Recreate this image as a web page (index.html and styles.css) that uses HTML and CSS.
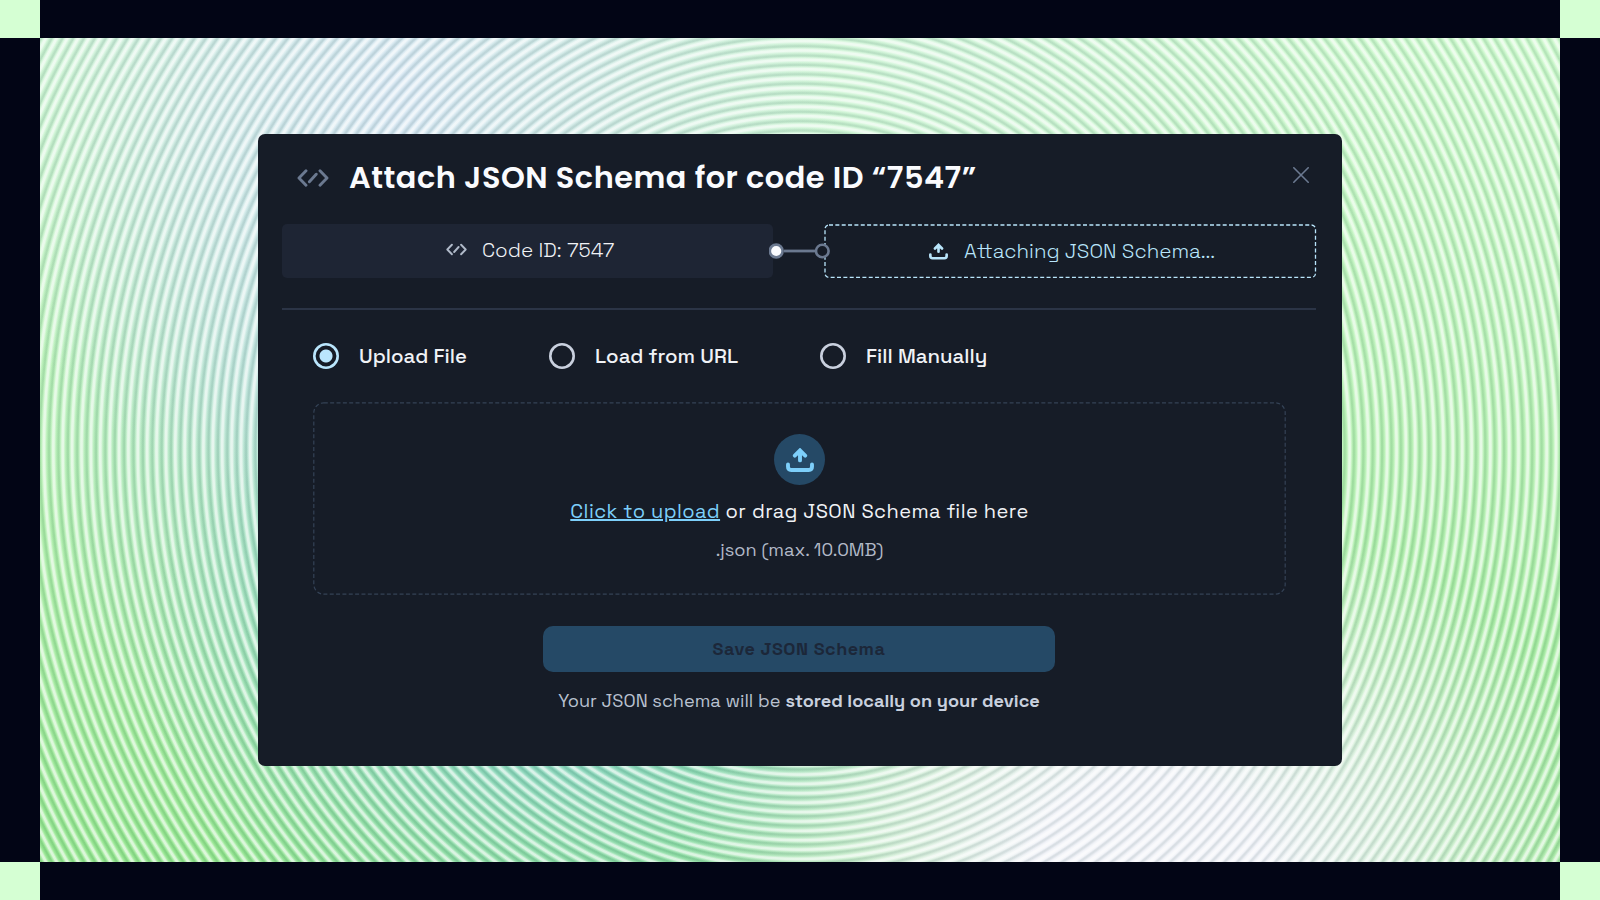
FILE: index.html
```html
<!DOCTYPE html>
<html lang="en">
<head>
<meta charset="utf-8">
<title>Attach JSON Schema</title>
<link rel="stylesheet" href="styles.css">
</head>
<body>
<svg class="defs" aria-hidden="true">
  <symbol id="code" viewBox="0 0 32 18"><path d="M9 1.8 2 9l7 7.2M23 1.8 30 9l-7 7.2M19.2 5.2l-6.8 7.6" fill="none" stroke="currentColor" stroke-width="2.900" stroke-linecap="round" stroke-linejoin="round"/></symbol>
  <symbol id="upload" viewBox="0 0 28 24"><path d="M2 16.4v2.4Q2 22 5.2 22h17.6q3.200 0 3.200-3.200v-2.400M14 12.400V3M8.800 7.600 14 2.400l5.200 5.200" fill="none" stroke="currentColor" stroke-width="3.900" stroke-linecap="round" stroke-linejoin="miter"/></symbol>
</svg>
<div class="frame">
  <i class="corner"></i><i></i><i class="corner"></i>
  <i></i>
  <main class="canvas">
    <section class="modal">
      <header class="head">
        <svg class="head-icon"><use href="#code"/></svg>
        <h1 class="title">Attach JSON Schema for code ID “7547”</h1>
        <svg class="close" viewBox="0 0 16 16"><path d="M.8.8l14.400 14.400M15.200.8.8 15.200" stroke="currentColor" stroke-width="1.600" stroke-linecap="round"/></svg>
      </header>
      <div class="steps">
        <div class="step done"><svg class="code-sm"><use href="#code"/></svg><span class="t-code">Code ID: 7547</span></div>
        <svg class="link" viewBox="0 0 62 16">
          <path d="M15 8h32" stroke="#6b7990" stroke-width="2.800"/>
          <circle cx="7.200" cy="8" r="6.400" fill="#fafbfe" stroke="#6b7990" stroke-width="2.600"/>
          <circle cx="53.300" cy="8" r="6.300" fill="#161c27" stroke="#6b7990" stroke-width="2.600"/>
        </svg>
        <div class="step active">
          <svg class="dash"><rect x="1" y="1" width="490.500" height="52.400" rx="4"/></svg>
          <svg class="up-sm"><use href="#upload"/></svg><span class="t-attach">Attaching JSON Schema...</span>
        </div>
      </div>
      <div class="body">
        <div class="radios">
          <div class="radio r1"><i class="ring on"></i><span>Upload File</span></div>
          <div class="radio r2"><i class="ring"></i><span>Load from URL</span></div>
          <div class="radio"><i class="ring"></i><span>Fill Manually</span></div>
        </div>
        <div class="drop">
          <svg class="dash"><rect x=".8" y=".8" width="971.400" height="191.400" rx="10"/></svg>
          <div class="badge"><svg class="up-lg"><use href="#upload"/></svg></div>
          <p class="prompt"><a class="t-click">Click to upload</a><span>or drag JSON Schema file here</span></p>
          <p class="hint"><span>.json (max. 10.0MB)</span></p>
        </div>
        <button class="save"><span>Save JSON Schema</span></button>
        <p class="note"><span>Your JSON schema will be</span><b class="t-bold">stored locally on your device</b></p>
      </div>
    </section>
  </main>
  <i></i>
  <i class="corner"></i><i></i><i class="corner"></i>
</div>
</body>
</html>
```
FILE: styles.css
```css
* { box-sizing: border-box; margin: 0; padding: 0; }
body { width: 1600px; height: 900px; overflow: hidden; background: #020515; font-family: "Space Grotesk", Inter, sans-serif; color: #f0f2f6; }
.defs { display: none; }
svg, i { display: block; }
span, a, b { white-space: nowrap; }

/* dark frame with light corner squares */
.frame { display: grid; width: 1600px; height: 900px; grid-template-columns: 40px 1520px 40px; grid-template-rows: 38px 824px 38px; }
.corner { background: #d5ffd3; }

/* concentric stripes over a soft colour field */
.canvas {
  padding: 96px 218px;
  background:
    repeating-radial-gradient(circle at 760px 412px, rgba(20,60,60,.1) 0, rgba(20,60,60,.1) 1px, rgba(255,255,255,.12) 3px, rgba(255,255,255,.68) 4.900px, rgba(255,255,255,.68) 6.400px, rgba(255,255,255,.2) 7.900px, rgba(20,60,60,.1) 9.380px),
    radial-gradient(ellipse 470px 370px at 1110px 830px, #eff1f7 25%, #eff1f7b0 55%, #eff1f700),
    radial-gradient(ellipse 440px 440px at 360px 60px, #d2e4f0 5%, #d2e4f0b0 45%, #d2e4f000),
    radial-gradient(ellipse 480px 380px at 900px 20px, #cdf3d6, #cdf3d600),
    radial-gradient(ellipse 420px 330px at 520px 620px, #84d2c2 20%, #84d2c200),
    radial-gradient(ellipse 280px 420px at 270px 350px, #acddd4, #acddd400),
    linear-gradient(180deg, #c8f8c8, #b2f0ae 50%, #90e68a);
}

.modal { width: 1084px; height: 632px; padding: 0 24px; border-radius: 7px; background: #161c27; }
.head { display: flex; height: 90px; align-items: center; padding: 0 9px 4px 15px; }
.head-icon { width: 32px; height: 18px; margin-top: 2px; color: #6b7990; }
.title { flex: 1; margin-top: 2px; padding-left: 20px; font: 600 30.400px/36px Poppins, Inter, sans-serif; letter-spacing: .5px; color: #fafbfe; white-space: nowrap; }
.close { width: 16px; height: 16px; margin-top: -4px; color: #6b7990; }

.steps { display: flex; height: 54px; align-items: center; }
.step { display: flex; width: 491px; height: 54px; align-items: center; }
.done { padding-left: 164px; padding-bottom: 3px; gap: 15px; border-radius: 5px; background: #1e2534; }
.code-sm { width: 21px; height: 13px; color: #b0bac9; }
.link { position: relative; z-index: 1; width: 62px; height: 16px; margin: 0 -6.500px 0 -4.500px; }
.active { position: relative; width: 493px; padding-left: 105px; gap: 16px; color: #b9e5fb; }
.dash { position: absolute; inset: 0; width: 100%; height: 100%; fill: none; stroke: #b9e5fb; stroke-width: 1.300px; stroke-dasharray: 4 2.350; }
.up-sm { width: 19px; height: 17px; }
.t-code, .t-attach { font-size: 20.450px; line-height: 26px; font-weight: 360; }

.body { margin-top: 30px; padding: 0 31px; border-top: 2px solid #2b3446; width: 1034px; }
.radios { display: flex; height: 92px; align-items: center; }
.radio { display: flex; align-items: center; gap: 20px; font-size: 20.450px; font-weight: 500; }
.r1 { width: 236px; }
.r2 { width: 271px; }
.ring { width: 26px; height: 26px; border-radius: 50%; box-shadow: inset 0 0 0 2.600px #c9d0de; }
.on { box-shadow: inset 0 0 0 2.600px #bae6fd; background: radial-gradient(circle, #bae6fd 6px, transparent 7px); }

.drop { position: relative; display: flex; width: 973px; height: 193px; flex-direction: column; align-items: center; padding-top: 32px; }
.drop .dash { stroke: #344256; stroke-width: 1.200px; }
.badge { display: flex; width: 51px; height: 51px; align-items: center; justify-content: center; border-radius: 50%; background: #254966; color: #7dcffa; }
.up-lg { width: 28px; height: 24px; }
.prompt { display: flex; gap: 5.500px; margin-top: 12px; font-size: 20px; line-height: 28px; letter-spacing: .43px; }
.t-click { color: #7dcffa; text-decoration: underline; text-decoration-thickness: 2px; text-underline-offset: 1px; }
.hint { margin-top: 12px; font-size: 18.200px; line-height: 26px; color: #b2b9c7; }

.save { display: block; width: 512px; height: 46px; margin: 31px 0 0 230px; border: 0; border-radius: 10px; background: #254966; color: #1c2739; font: 700 18px/46px "Space Grotesk", Inter, sans-serif; letter-spacing: .5px; }
.note { display: flex; justify-content: center; gap: 5px; margin-top: 15px; font-size: 18.170px; line-height: 27px; color: #b9c1d0; }
.t-bold { font-weight: 600; color: #c8d0de; }
```
